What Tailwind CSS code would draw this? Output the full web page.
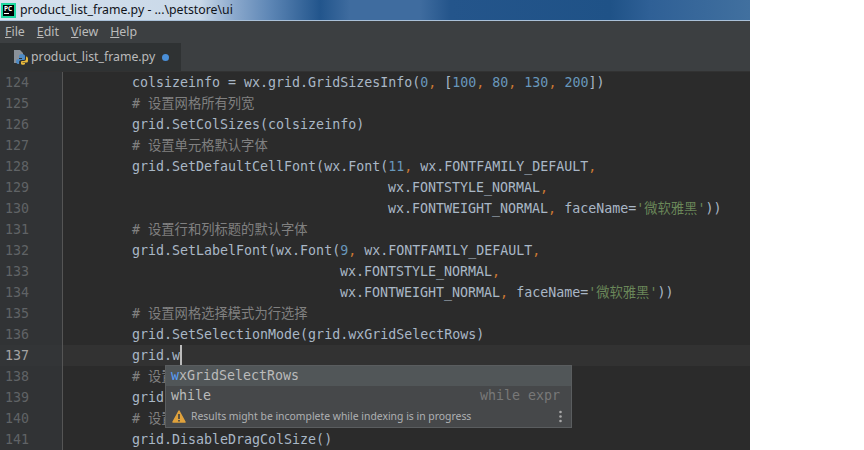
<!DOCTYPE html>
<html lang="zh">
<head>
<meta charset="UTF-8" />
<title>product_list_frame.py</title>
<script src="https://cdn.jsdelivr.net/npm/@tailwindcss/browser@4"></script>
</head>
<body class="bg-white overflow-hidden">
<div class="w-[750px] h-[450px] flex flex-col overflow-hidden bg-[#2b2b2b]">

  <!-- title bar -->
  <div class="h-[20px] flex items-center bg-[linear-gradient(90deg,#d5e1ed_0px,#c9d8e8_200px,#8aa8cc_235px,#5d86b5_270px,#22558c_320px,#3f6c9f_350px,#3f6c9f_420px,#24558b_450px,#1f5287_610px,#2f6096_650px,#41709f_750px)] font-['Noto_Sans','Liberation_Sans',sans-serif] text-[12.3px] text-[#10131a] shrink-0">
    <div class="w-[15px] h-[15px] ml-[1px] mr-[4px] bg-black border-[2px] border-[#1fd8a0] flex flex-col text-white text-[6.500px] font-bold leading-[7px] pl-[1px] pt-[0px] overflow-hidden">
      <span>PC</span>
      <span class="w-[5px] h-[1px] bg-white mt-[1px]"></span>
    </div>
    <span>product_list_frame.py - ...\petstore\ui</span>
  </div>
  <div class="h-[1px] bg-[#a9c0d8] shrink-0"></div>

  <!-- menu -->
  <div class="h-[22px] flex items-center gap-[12px] pl-[5px] bg-[#3c3f41] text-[#bbbbbb] text-[12.4px] font-['Noto_Sans','Liberation_Sans',sans-serif] shrink-0">
    <span><u>F</u>ile</span><span><u>E</u>dit</span><span><u>V</u>iew</span><span><u>H</u>elp</span>
  </div>

  <!-- tabs -->
  <div class="h-[29px] flex bg-[#3c3f41] border-b border-[#323232] shrink-0">
    <div class="w-[181px] flex items-center bg-[#2f3233] pl-[14px] text-[#bbbbbb] text-[12.3px] font-['Noto_Sans','Liberation_Sans',sans-serif]">
      <svg class="w-[14px] h-[16px] mr-[3px]" viewBox="0 0 14 16">
        <path d="M0 1h6l3 3v5H5v5H0z" fill="#8a9199"/>
        <path d="M8 5c-2 0-3 1-3 2v2h3v1H4c-1 0-2 1-2 2.500S3 15 4 15h1v-2c0-1 1-2 2-2h3c1 0 1-1 1-1V7c0-1-1-2-3-2z" fill="#4f8bc4"/>
        <path d="M12 8v2c0 1-1 2-2 2H8c-1 0-1 1-1 1v2c0 1 4 1 4 0v-1H8.500v-.5H13c1 0 1-2 1-3s0-3-2-3z" fill="#e8b93c"/>
      </svg>
      <span>product_list_frame.py</span>
      <span class="w-[7px] h-[7px] rounded-full bg-[#4a8fd8] ml-[7px]"></span>
    </div>
  </div>

  <!-- editor -->
  <div class="relative flex-1 flex min-h-0 font-['DejaVu_Sans_Mono','Noto_Sans_CJK_SC',monospace] text-[13.3px] leading-[21px]">
    <div class="w-[63px] bg-[#313335] border-r border-[#555555] text-[#606366] shrink-0">
      <div class="pl-[5px]">124</div><div class="pl-[5px]">125</div><div class="pl-[5px]">126</div><div class="pl-[5px]">127</div><div class="pl-[5px]">128</div><div class="pl-[5px]">129</div>
      <div class="pl-[5px]">130</div><div class="pl-[5px]">131</div><div class="pl-[5px]">132</div><div class="pl-[5px]">133</div><div class="pl-[5px]">134</div><div class="pl-[5px]">135</div>
      <div class="pl-[5px]">136</div><div class="pl-[5px] text-[#a4a3a3] bg-[#333537]">137</div><div class="pl-[5px]">138</div><div class="pl-[5px]">139</div><div class="pl-[5px]">140</div><div class="pl-[5px]">141</div>
    </div>
    <div class="flex-1 text-[#a9b7c6] whitespace-nowrap">
      <div class="pl-[69px]">colsizeinfo = wx.grid.GridSizesInfo(<span class="text-[#6897bb]">0</span><span class="text-[#cc7832]">,</span> [<span class="text-[#6897bb]">100</span><span class="text-[#cc7832]">,</span> <span class="text-[#6897bb]">80</span><span class="text-[#cc7832]">,</span> <span class="text-[#6897bb]">130</span><span class="text-[#cc7832]">,</span> <span class="text-[#6897bb]">200</span>])</div>
      <div class="pl-[69px] text-[#808080]"># 设置网格所有列宽</div>
      <div class="pl-[69px]">grid.SetColSizes(colsizeinfo)</div>
      <div class="pl-[69px] text-[#808080]"># 设置单元格默认字体</div>
      <div class="pl-[69px]">grid.SetDefaultCellFont(wx.Font(<span class="text-[#6897bb]">11</span><span class="text-[#cc7832]">,</span> wx.FONTFAMILY_DEFAULT<span class="text-[#cc7832]">,</span></div>
      <div class="pl-[325px]">wx.FONTSTYLE_NORMAL<span class="text-[#cc7832]">,</span></div>
      <div class="pl-[325px]">wx.FONTWEIGHT_NORMAL<span class="text-[#cc7832]">,</span> faceName=<span class="text-[#6a8759]">'微软雅黑'</span>))</div>
      <div class="pl-[69px] text-[#808080]"># 设置行和列标题的默认字体</div>
      <div class="pl-[69px]">grid.SetLabelFont(wx.Font(<span class="text-[#6897bb]">9</span><span class="text-[#cc7832]">,</span> wx.FONTFAMILY_DEFAULT<span class="text-[#cc7832]">,</span></div>
      <div class="pl-[277px]">wx.FONTSTYLE_NORMAL<span class="text-[#cc7832]">,</span></div>
      <div class="pl-[277px]">wx.FONTWEIGHT_NORMAL<span class="text-[#cc7832]">,</span> faceName=<span class="text-[#6a8759]">'微软雅黑'</span>))</div>
      <div class="pl-[69px] text-[#808080]"># 设置网格选择模式为行选择</div>
      <div class="pl-[69px]">grid.SetSelectionMode(grid.wxGridSelectRows)</div>
      <div class="pl-[69px] bg-[#323232] flex"><span>grid.w</span><span class="w-[2px] h-[21px] bg-[#bbbbbb]"></span></div>
      <div class="pl-[69px] text-[#808080]"># 设置</div>
      <div class="pl-[69px]">grid</div>
      <div class="pl-[69px] text-[#808080]"># 设置</div>
      <div class="pl-[69px]">grid.DisableDragColSize()</div>
    </div>

    <!-- completion popup -->
    <div class="absolute left-[165px] top-[293px] w-[407px] h-[63px] bg-[#46484a] border border-[#5a5d5f] text-[#bbbbbb]">
      <div class="h-[20px] bg-[#515658] pl-[5px] leading-[20px]"><span class="text-[#589df6]">w</span>xGridSelectRows</div>
      <div class="h-[20px] flex justify-between pl-[5px] pr-[11px] leading-[20px]"><span>while</span><span class="text-[#787878]">while expr</span></div>
      <div class="h-[21px] flex items-center pl-[6px] pr-[9px] font-['Noto_Sans','Liberation_Sans',sans-serif] text-[10.4px] text-[#afb1b3]">
        <svg class="w-[14px] h-[13px] mr-[5px]" viewBox="0 0 14 13"><path d="M7 1l6 11H1z" fill="#e0a23c" stroke="#e0a23c" stroke-width="1.500" stroke-linejoin="round"/><path d="M6.200 4h1.600v5H6.200zM6.200 10h1.600v1.500H6.200z" fill="#3c3f41"/></svg>
        <span class="flex-1">Results might be incomplete while indexing is in progress</span>
        <svg class="w-[3px] h-[13px]" viewBox="0 0 3 13"><circle cx="1.500" cy="2" r="1.300" fill="#a8a8a8"/><circle cx="1.500" cy="6.500" r="1.300" fill="#a8a8a8"/><circle cx="1.500" cy="11" r="1.300" fill="#a8a8a8"/></svg>
      </div>
    </div>
  </div>
</div>
</body>
</html>
